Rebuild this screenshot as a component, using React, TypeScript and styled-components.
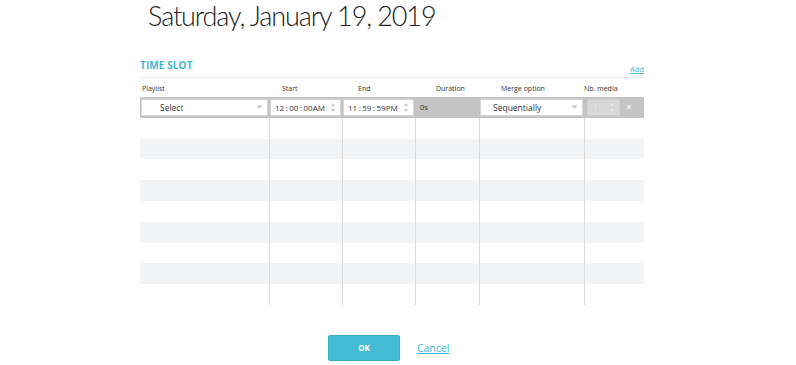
import React from "react";
import styled, { createGlobalStyle } from "styled-components";

const GlobalStyle = createGlobalStyle`
  body {
    margin: 0;
    background: #ffffff;
    font-family: "Open Sans", "Noto Sans", sans-serif;
    color: #333;
  }
`;

const COLS = "129px 73px 73px 64px 105px 60px";
const ACCENT = "#3fb8d2";

const Page = styled.div`
  width: 796px;
  height: 365px;
  padding-left: 140px;
  box-sizing: border-box;
`;

const Title = styled.h1`
  margin: 0;
  padding: 0 0 0 8px;
  height: 50px;
  box-sizing: border-box;
  font-family: "Lato", "Open Sans", sans-serif;
  font-weight: 300;
  font-size: 27px;
  letter-spacing: -1.1px;
  line-height: 32px;
  color: #222;
`;

const Panel = styled.div`
  width: 504px;
`;

const SectionHead = styled.div`
  display: flex;
  justify-content: space-between;
  align-items: flex-end;
  height: 28px;
  border-bottom: 1px solid #ececec;
  box-sizing: border-box;
  padding-bottom: 3px;
`;

const SectionTitle = styled.div`
  color: ${ACCENT};
  font-weight: 700;
  font-size: 10px;
  margin-bottom: 2px;
  letter-spacing: 0.1px;
`;

const LinkText = styled.a<{ size: number }>`
  color: ${ACCENT};
  font-size: ${({ size }) => size}px;
  text-decoration: underline;
  cursor: pointer;
`;

const HeadRow = styled.div`
  display: grid;
  grid-template-columns: ${COLS};
  height: 19px;
  align-items: center;
  font-size: 7px;
  color: #333;
`;

const HeadCell = styled.div<{ pad: number }>`
  padding-left: ${({ pad }) => pad}px;
  padding-top: 2px;
`;

const Grid = styled.div`
  display: flex;
  flex-direction: column;
`;

const Row = styled.div<{ shade: "edit" | "odd" | "even" }>`
  display: grid;
  grid-template-columns: ${COLS};
  height: 20.8px;
  background: ${({ shade }) =>
    shade === "edit" ? "#c4c4c4" : shade === "odd" ? "#f1f3f4" : "#ffffff"};
`;

const Cell = styled.div<{ line?: boolean }>`
  border-left: ${({ line }) => (line ? "1px solid #dadada" : "none")};
  box-sizing: border-box;
  display: flex;
  align-items: center;
  padding: 1px 1px;
`;

const Field = styled.div<{ disabled?: boolean; width?: number }>`
  flex: ${({ width }) => (width ? `0 0 ${width}px` : "1")};
  margin-left: ${({ width }) => (width ? 2 : 0)}px;
  height: 17px;
  box-sizing: border-box;
  border: 1px solid ${({ disabled }) => (disabled ? "#cfcfcf" : "#d6d6d6")};
  background: ${({ disabled }) => (disabled ? "#d7d7d7" : "#ffffff")};
  display: flex;
  align-items: center;
  justify-content: space-between;
  font-size: 8px;
  color: ${({ disabled }) => (disabled ? "#e8e8e8" : "#333")};
  padding: 0 4px;
`;

const SelectText = styled.span<{ indent: number }>`
  padding-left: ${({ indent }) => indent}px;
  font-size: 8.5px;
`;

const Colon = styled.span`
  margin: 0 1.5px;
`;

const PlainText = styled.span`
  font-size: 7.5px;
  padding-left: 4px;
  color: #333;
`;

const Remove = styled.span`
  color: #f2f2f2;
  font-size: 10px;
  font-weight: 700;
  margin-left: 6px;
  line-height: 1;
`;

const Footer = styled.div`
  display: flex;
  align-items: center;
  gap: 17px;
  padding: 30px 0 0 188px;
`;

const OkButton = styled.button`
  width: 72px;
  height: 26px;
  border: 1px solid #3aaec6;
  border-radius: 2px;
  background: #45bcd4;
  color: #fff;
  font-family: "Open Sans", sans-serif;
  font-weight: 700;
  font-size: 8px;
  cursor: pointer;
`;

const Caret = () => (
  <svg width="7" height="4" viewBox="0 0 7 4">
    <path d="M0.5 0.5 L3.5 3.5 L6.5 0.5 Z" fill="#c2c2c2" />
  </svg>
);

const Spinner = ({ color = "#c4c4c4" }: { color?: string }) => (
  <svg width="6" height="13" viewBox="0 0 6 13">
    <path d="M1 5 L3 2 L5 5 Z" fill={color} />
    <path d="M1 8 L3 11 L5 8 Z" fill={color} />
  </svg>
);

const Time = ({ parts, suffix }: { parts: string[]; suffix: string }) => (
  <span>
    {parts[0]}
    <Colon>:</Colon>
    {parts[1]}
    <Colon>:</Colon>
    {parts[2]}
    {suffix}
  </span>
);

const headers = [
  { label: "Playlist", pad: 2 },
  { label: "Start", pad: 13 },
  { label: "End", pad: 16 },
  { label: "Duration", pad: 21 },
  { label: "Merge option", pad: 22 },
  { label: "Nb. media", pad: 0 },
];

const App = () => {
  const emptyRows = Array.from({ length: 9 }, (_, i) => i);
  return (
    <>
      <GlobalStyle />
      <Page>
        <Title>Saturday, January 19, 2019</Title>
        <Panel>
          <SectionHead>
            <SectionTitle>TIME SLOT</SectionTitle>
            <LinkText size={7.5}>Add</LinkText>
          </SectionHead>
          <HeadRow>
            {headers.map((h) => (
              <HeadCell key={h.label} pad={h.pad}>
                {h.label}
              </HeadCell>
            ))}
          </HeadRow>
          <Grid>
            <Row shade="edit">
              <Cell>
                <Field>
                  <SelectText indent={14}>Select</SelectText>
                  <Caret />
                </Field>
              </Cell>
              <Cell>
                <Field>
                  <Time parts={["12", "00", "00"]} suffix="AM" />
                  <Spinner />
                </Field>
              </Cell>
              <Cell>
                <Field>
                  <Time parts={["11", "59", "59"]} suffix="PM" />
                  <Spinner />
                </Field>
              </Cell>
              <Cell>
                <PlainText>0s</PlainText>
              </Cell>
              <Cell>
                <Field>
                  <SelectText indent={8}>Sequentially</SelectText>
                  <Caret />
                </Field>
              </Cell>
              <Cell>
                <Field disabled width={33}>
                  <SelectText indent={1}>1</SelectText>
                  <Spinner color="#e6e6e6" />
                </Field>
                <Remove>×</Remove>
              </Cell>
            </Row>
            {emptyRows.map((i) => (
              <Row key={i} shade={i % 2 === 1 ? "odd" : "even"}>
                <Cell />
                <Cell line />
                <Cell line />
                <Cell line />
                <Cell line />
                <Cell line />
              </Row>
            ))}
          </Grid>
        </Panel>
        <Footer>
          <OkButton>OK</OkButton>
          <LinkText size={10.5}>Cancel</LinkText>
        </Footer>
      </Page>
    </>
  );
};

export default App;
